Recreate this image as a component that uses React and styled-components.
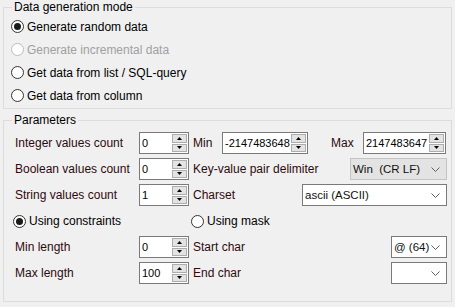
import React from "react";
import styled, { createGlobalStyle } from "styled-components";

const GlobalStyle = createGlobalStyle`
  html, body {
    margin: 0;
    padding: 0;
    background: #f0f0f0;
  }
  body {
    font-family: "Liberation Sans", Arial, sans-serif;
    font-size: 12px;
    color: #000;
  }
`;

const Window = styled.div`
  width: 455px;
  height: 307px;
  display: flex;
  flex-direction: column;
  gap: 4px;
  overflow: hidden;
`;

const Group = styled.fieldset`
  margin: 0 3px;
  padding: 0;
  border: 1px solid #dcdcdc;
  min-width: 0;
`;

const Legend = styled.legend`
  margin-left: 8px;
  padding: 0 2px;
  line-height: 15px;
  font-size: 12px;
  color: #000;
`;

const ModeBody = styled.div`
  display: flex;
  flex-direction: column;
  padding: 0 0 1px 7px;
`;

const ParamBody = styled.div`
  display: flex;
  flex-direction: column;
  padding: 2px 4px 15px 11px;
`;

const RadioRow = styled.label`
  display: flex;
  align-items: center;
  gap: 3px;
  height: ${(p) => p.$h || 23}px;
  width: ${(p) => (p.$w ? `${p.$w}px` : "auto")};
  margin-left: ${(p) => p.$ml || 0}px;
  color: ${(p) => (p.$disabled ? "#a0a0a0" : "#000")};
`;

const RadioMark = styled.span`
  width: 13px;
  height: 13px;
  box-sizing: border-box;
  border-radius: 50%;
  border: 1px solid ${(p) => (p.$disabled ? "#bcbcbc" : "#333")};
  background: #fff;
  display: flex;
  align-items: center;
  justify-content: center;
  flex-shrink: 0;
  &::after {
    content: "";
    width: 7px;
    height: 7px;
    border-radius: 50%;
    background: #1a1a1a;
    display: ${(p) => (p.$checked ? "block" : "none")};
  }
`;

const Row = styled.div`
  display: flex;
  align-items: center;
  height: 26px;
`;

const Label = styled.span`
  width: ${(p) => (p.$w ? `${p.$w}px` : "auto")};
  margin-left: ${(p) => p.$ml || 0}px;
  flex-shrink: 0;
  color: #2e0a0e;
  white-space: nowrap;
`;

const SpinBox = styled.div`
  display: flex;
  width: ${(p) => p.$w}px;
  height: 22px;
  box-sizing: border-box;
  border: 1px solid #7a7a7a;
  background: #fff;
  flex-shrink: 0;
`;

const SpinValue = styled.div`
  flex: 1;
  display: flex;
  align-items: center;
  padding-left: 2px;
  font-size: 11px;
  overflow: hidden;
  white-space: nowrap;
`;

const SpinButtons = styled.div`
  width: 16px;
  display: flex;
  flex-direction: column;
  gap: 1px;
  padding: 1px 1px 1px 0;
  box-sizing: border-box;
`;

const SpinButton = styled.div`
  flex: 1;
  background: #e3e3e3;
  border: 1px solid #adadad;
  display: flex;
  align-items: center;
  justify-content: center;
`;

const Combo = styled.div`
  display: flex;
  align-items: center;
  width: ${(p) => p.$w}px;
  height: 22px;
  box-sizing: border-box;
  margin-left: auto;
  padding-left: 2px;
  border: 1px solid ${(p) => (p.$disabled ? "#c4c4c4" : "#7a7a7a")};
  background: ${(p) => (p.$disabled ? "#e3e3e3" : "#fff")};
  flex-shrink: 0;
`;

const ComboText = styled.span`
  flex: 1;
  white-space: pre;
  font-size: 11.5px;
  color: #111;
`;

const ChevronBox = styled.span`
  display: flex;
  margin-right: 6px;
`;

const Arrow = ({ down }) => (
  <svg width="5" height="3" viewBox="0 0 5 3">
    <polygon points={down ? "0,0 5,0 2.5,3" : "2.5,0 5,3 0,3"} fill="#000" />
  </svg>
);

const Spin = ({ value, w = 50 }) => (
  <SpinBox $w={w}>
    <SpinValue>{value}</SpinValue>
    <SpinButtons>
      <SpinButton>
        <Arrow />
      </SpinButton>
      <SpinButton>
        <Arrow down />
      </SpinButton>
    </SpinButtons>
  </SpinBox>
);

const Select = ({ value = "", w, disabled }) => (
  <Combo $w={w} $disabled={disabled}>
    <ComboText>{value}</ComboText>
    <ChevronBox>
      <svg width="9" height="5" viewBox="0 0 9 5">
        <polyline points="0.5,0.5 4.5,4.5 8.5,0.5" fill="none" stroke="#606060" strokeWidth="1" />
      </svg>
    </ChevronBox>
  </Combo>
);

const Radio = ({ children, checked, disabled, ...rest }) => (
  <RadioRow $disabled={disabled} {...rest}>
    <RadioMark $checked={checked} $disabled={disabled} />
    {children}
  </RadioRow>
);

export default function App() {
  return (
    <>
      <GlobalStyle />
      <Window>
        <Group>
          <Legend>Data generation mode</Legend>
          <ModeBody>
            <Radio checked>Generate random data</Radio>
            <Radio disabled>Generate incremental data</Radio>
            <Radio>Get data from list / SQL-query</Radio>
            <Radio>Get data from column</Radio>
          </ModeBody>
        </Group>
        <Group>
          <Legend>Parameters</Legend>
          <ParamBody>
            <Row>
              <Label $w={124}>Integer values count</Label>
              <Spin value="0" />
              <Label $ml={4} $w={29}>Min</Label>
              <Spin value="-2147483648" w={86} />
              <Label $ml={23} $w={32}>Max</Label>
              <Spin value="2147483647" w={83} />
            </Row>
            <Row>
              <Label $w={124}>Boolean values count</Label>
              <Spin value="0" />
              <Label $ml={4}>Key-value pair delimiter</Label>
              <Select value="Win  (CR LF)" w={97} disabled />
            </Row>
            <Row>
              <Label $w={124}>String values count</Label>
              <Spin value="1" />
              <Label $ml={4}>Charset</Label>
              <Select value="ascii (ASCII)" w={145} />
            </Row>
            <Row>
              <Radio checked $h={26} $w={178} $ml={-2}>Using constraints</Radio>
              <Radio $h={26}>Using mask</Radio>
            </Row>
            <Row>
              <Label $w={124}>Min length</Label>
              <Spin value="0" />
              <Label $ml={4}>Start char</Label>
              <Select value="@ (64)" w={56} />
            </Row>
            <Row>
              <Label $w={124}>Max length</Label>
              <Spin value="100" />
              <Label $ml={4}>End char</Label>
              <Select w={56} />
            </Row>
          </ParamBody>
        </Group>
      </Window>
    </>
  );
}
